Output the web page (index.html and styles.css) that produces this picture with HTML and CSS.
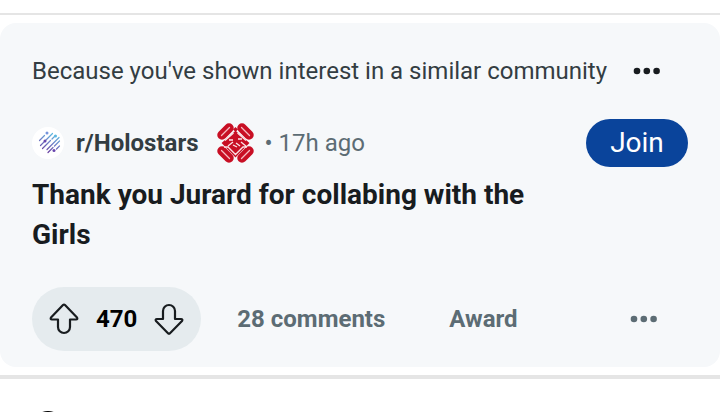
FILE: index.html
```html
<!DOCTYPE html>
<html lang="en">
<head>
<meta charset="utf-8">
<title>r/Holostars</title>
<link rel="stylesheet" href="styles.css">
</head>
<body>
<main class="feed">
  <article class="card">
    <div class="reason">
      <span>Because you've shown interest in a similar community</span>
      <button class="more" type="button" aria-label="Post options">
        <svg width="28" height="8" viewBox="0 0 28 8" fill="currentColor"><circle cx="4" cy="4" r="3.3"/><circle cx="13.800" cy="4" r="3.3"/><circle cx="23.600" cy="4" r="3.3"/></svg>
      </button>
    </div>
    <header class="source">
      <svg class="avatar" width="32" height="32" viewBox="0 0 32 32">
        <defs><linearGradient id="rain" gradientUnits="userSpaceOnUse" x1="22" y1="5" x2="14" y2="26"><stop offset="0" stop-color="#58c4e4"/><stop offset=".5" stop-color="#6f80c8"/><stop offset="1" stop-color="#68379b"/></linearGradient></defs>
        <circle cx="16" cy="16" r="16" fill="#fff"/>
        <g stroke="url(#rain)" stroke-width="1.2" stroke-linecap="round" fill="none"><path d="M7.500 13.500l5-5M8.500 18.500l12-12M10.500 21.500l8-8M20 12l3-3M15 22.500l12-12M16 25.500l5-5M22.500 19l5-5M24.500 22l3-3"/></g>
        <g fill="#6946ae"><circle cx="13" cy="14" r="1.500"/><circle cx="22" cy="23.500" r="1.500"/></g><circle cx="15" cy="6" r="1.500" fill="#7594dc"/><circle cx="23.500" cy="9" r="1.500" fill="#5cb8df"/>
      </svg>
      <a class="community" href="#">r/Holostars</a>
      <svg class="emblem" width="38" height="40" viewBox="0 0 38 40" fill="none" stroke-linecap="round">
        <g stroke="#c80f24" stroke-width="9.500"><path d="M5 12l7-7M32 12l-7-7M5 28l7 7M32 28l-7 7"/></g>
        <path d="M18.500 9L31 20L18.500 33L6 20Z" fill="#c80f24" stroke="#c80f24" stroke-width="2"/>
        <g stroke="#f5bcc2" stroke-width="1.3"><path d="M4.500 12.500l8-8M32.500 12.500l-8-8M4.500 27.500l8 8M32.500 27.500l-8 8"/></g>
        <g stroke="#fbe3e5" stroke-width="1.3" stroke-linecap="butt"><path d="M8 17.500L16.500 10M29 17.500L20.500 10M12 17h4M21 16h4M11 23l5-4M24 19l6 5M16 22l4 2M19 20l4 3M7 24h4l7.500 7.500l7.500-7.500h4"/></g>
        <path d="M18.500 4l2.500 2.500l-2.500 2.500l-2.500-2.500Z" fill="#c80f24"/>
      </svg>
      <span class="time">•&nbsp;17h ago</span>
      <button class="join" type="button">Join</button>
    </header>
    <h1 class="title">Thank you Jurard for collabing with the Girls</h1>
    <footer class="actions">
      <div class="votes">
        <button type="button" aria-label="Upvote"><svg width="32" height="32" viewBox="0 0 32 32"><path d="M15 2Q16 1 17 2L29 14.500Q30 16.500 28 16.500H22V24A6 6 0 0 1 10 24V16.500H4Q2 16.500 3 14.500Z"/></svg></button>
        <span class="score">470</span>
        <button type="button" aria-label="Downvote"><svg width="32" height="32" viewBox="0 0 32 32"><path d="M15 30.200Q16 31.200 17 30.200L29 18Q30 16 28 16H22V8A6 6 0 0 0 10 8V16H4Q2 16 3 18Z"/></svg></button>
      </div>
      <a class="comments" href="#">28 comments</a>
      <button class="award" type="button">Award</button>
      <button class="more muted" type="button" aria-label="More actions">
        <svg width="28" height="8" viewBox="0 0 28 8" fill="currentColor"><circle cx="4" cy="4" r="3.3"/><circle cx="13.800" cy="4" r="3.3"/><circle cx="23.600" cy="4" r="3.3"/></svg>
      </button>
    </footer>
  </article>
  <section class="next-post"><svg width="32" height="32" viewBox="0 0 32 32"><circle cx="16" cy="16" r="16"/></svg></section>
</main>
</body>
</html>
```
FILE: styles.css
```css
* { box-sizing: border-box; }
body { display: flex; flex-direction: column; height: 100vh; margin: 0; padding-top: 13px; background: #fff; color: #181c1f; font-family: Roboto, sans-serif; }
button { margin: 0; padding: 0; border: 0; background: none; color: inherit; font: inherit; }
a { color: inherit; text-decoration: none; }
svg { display: block; flex: none; }
.feed { flex: 1; min-height: 0; overflow: hidden; border-top: 2px solid #e5e5e5; padding-top: 8px; }
.card { padding: 32px 32px 16px; border-radius: 16px; background: #f6f8fa; }
.reason { display: flex; align-items: center; justify-content: space-between; height: 32px; padding-right: 27px; font-size: 24px; line-height: 32px; color: #333d42; }
.more { color: #181c1f; }
.source { display: flex; align-items: center; margin-top: 32px; font-size: 24px; line-height: 32px; }
.community { margin-left: 12px; font-weight: 700; color: #333d42; }
.emblem { margin: 0 10px 0 18px; }
.time { color: #5c6c74; }
.join { width: 102px; height: 48px; margin-left: auto; border-radius: 24px; background: #0a449b; color: #fff; font-size: 28px; }
.title { max-width: 528px; margin: 8px 0 32px; font-size: 28px; line-height: 40px; font-weight: 700; }
.actions { display: flex; align-items: center; font-size: 24px; font-weight: 700; color: #5c6c74; }
.votes { display: flex; align-items: center; height: 64px; padding: 0 16px; gap: 16px; border-radius: 32px; background: #e5ebee; color: #000; }
.votes path { fill: none; stroke: #181c1f; stroke-width: 2.2; stroke-linejoin: round; }
.comments { margin-left: 36px; }
.award { margin-left: 64px; }
.muted { margin-left: auto; margin-right: 30px; color: #5c6c74; }
.next-post { margin-top: 8px; padding: 32px; border-top: 4px solid #e5e5e5; }
```
